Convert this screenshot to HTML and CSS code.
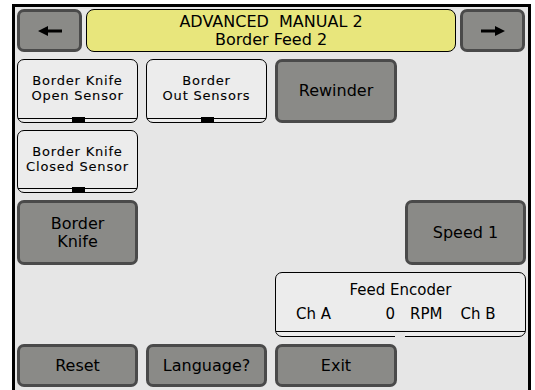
FILE: index.html
```html
<!DOCTYPE html>
<html lang="en">
<head>
  <meta charset="UTF-8">
  <title>Advanced Manual 2 - Border Feed 2</title>
  <link rel="stylesheet" href="styles.css">
</head>
<body>

  <div class="screen">
    <div class="top-bar">
      <div class="btn arrow-btn">
        <svg width="24" height="10" viewBox="0 0 24 10"><path d="M0 5 L10 0 L10 3.5 L24 3.5 L24 6.5 L10 6.5 L10 10 Z" fill="#000"/></svg>
      </div>
      <div class="title">ADVANCED  MANUAL 2<br>Border Feed 2</div>
      <div class="btn arrow-btn">
        <svg width="24" height="10" viewBox="0 0 24 10"><path d="M24 5 L14 0 L14 3.5 L0 3.5 L0 6.5 L14 6.5 L14 10 Z" fill="#000"/></svg>
      </div>
    </div>

    <div class="grid">
      <div class="sensor r1 c1"><span>Border Knife<br>Open Sensor</span><i class="led"></i></div>
      <div class="sensor r1 c2"><span>Border<br>Out Sensors</span><i class="led"></i></div>
      <div class="btn r1 c3">Rewinder</div>

      <div class="sensor r2 c1"><span>Border Knife<br>Closed Sensor</span><i class="led"></i></div>

      <div class="btn r3 c1">Border<br>Knife</div>
      <div class="btn r3 c4">Speed 1</div>

      <div class="encoder r4">
        <div class="enc-title">Feed Encoder</div>
        <div class="enc-row">
          <span class="ch-a">Ch A</span>
          <span class="enc-val">0</span>
          <span class="rpm">RPM</span>
          <span class="ch-b">Ch B</span>
        </div>
        <i class="split"></i>
      </div>

      <div class="btn r5 c1">Reset</div>
      <div class="btn r5 c2">Language?</div>
      <div class="btn r5 c3">Exit</div>
    </div>
  </div>

</body>
</html>
```

FILE: styles.css
```css
body {
  margin: 0;
  background: #fff;
  font-family: "DejaVu Sans", sans-serif;
  color: #000;
}

.screen {
  margin: 4px 0 0 12px;
  width: 508px;
  height: 384px;
  border: 3px solid #000;
  background: #e6e6e6;
  padding: 2px 3px 0 2px;
}

.top-bar {
  display: flex;
  gap: 4px;
  height: 43px;
  margin-bottom: 7px;
}

.btn {
  box-sizing: border-box;
  background: #8a8a87;
  border: 3px solid #4a4a4a;
  border-radius: 7px;
  display: flex;
  align-items: center;
  justify-content: center;
  text-align: center;
  font-size: 16px;
  line-height: 18px;
}

.arrow-btn {
  width: 65px;
}

.title {
  flex: 1;
  background: #e8e67c;
  border: 1px solid #000;
  border-radius: 8px;
  text-align: center;
  font-size: 16px;
  line-height: 18px;
  padding-top: 3px;
  white-space: pre;
}

.grid {
  display: grid;
  grid-template-columns: 121px 121px 122px 121px;
  grid-template-rows: 64px 63px 65px 65px 43px;
  column-gap: 8px;
  row-gap: 7px;
}

.r1 { grid-row: 1; }
.r2 { grid-row: 2; }
.r3 { grid-row: 3; }
.r4 { grid-row: 4; }
.r5 { grid-row: 5; }
.c1 { grid-column: 1; }
.c2 { grid-column: 2; }
.c3 { grid-column: 3; }
.c4 { grid-column: 4; }

.sensor {
  position: relative;
  box-sizing: border-box;
  background: #ececec;
  border: 1px solid #000;
  border-radius: 7px;
  display: flex;
  align-items: center;
  justify-content: center;
  text-align: center;
  padding-bottom: 6px;
  font-size: 13px;
  line-height: 15px;
  letter-spacing: 0.8px;
  -webkit-text-stroke: 0.1px #000;
}

.sensor::after {
  content: "";
  position: absolute;
  left: 0;
  right: 0;
  bottom: 3px;
  border-top: 1px solid #000;
}

.led {
  position: absolute;
  left: 50%;
  bottom: -1px;
  width: 13px;
  height: 6px;
  margin-left: -6px;
  background: #000;
}

.encoder {
  grid-column: 3 / 5;
  position: relative;
  box-sizing: border-box;
  background: #ececec;
  border: 1px solid #000;
  border-radius: 7px;
  font-size: 15px;
  line-height: 20px;
  padding-top: 7px;
}

.enc-title {
  text-align: center;
}

.enc-row {
  display: flex;
  padding-left: 20px;
  margin-top: 4px;
}

.ch-a { width: 72px; }
.enc-val { width: 27px; text-align: right; }
.rpm { margin-left: 15px; }
.ch-b { margin-left: 18px; }

.encoder::after {
  content: "";
  position: absolute;
  left: 0;
  right: 0;
  bottom: 4px;
  border-top: 1px solid #000;
}

.split {
  position: absolute;
  left: 119px;
  bottom: -1px;
  width: 10px;
  height: 7px;
  background: #e6e6e6;
}
```
